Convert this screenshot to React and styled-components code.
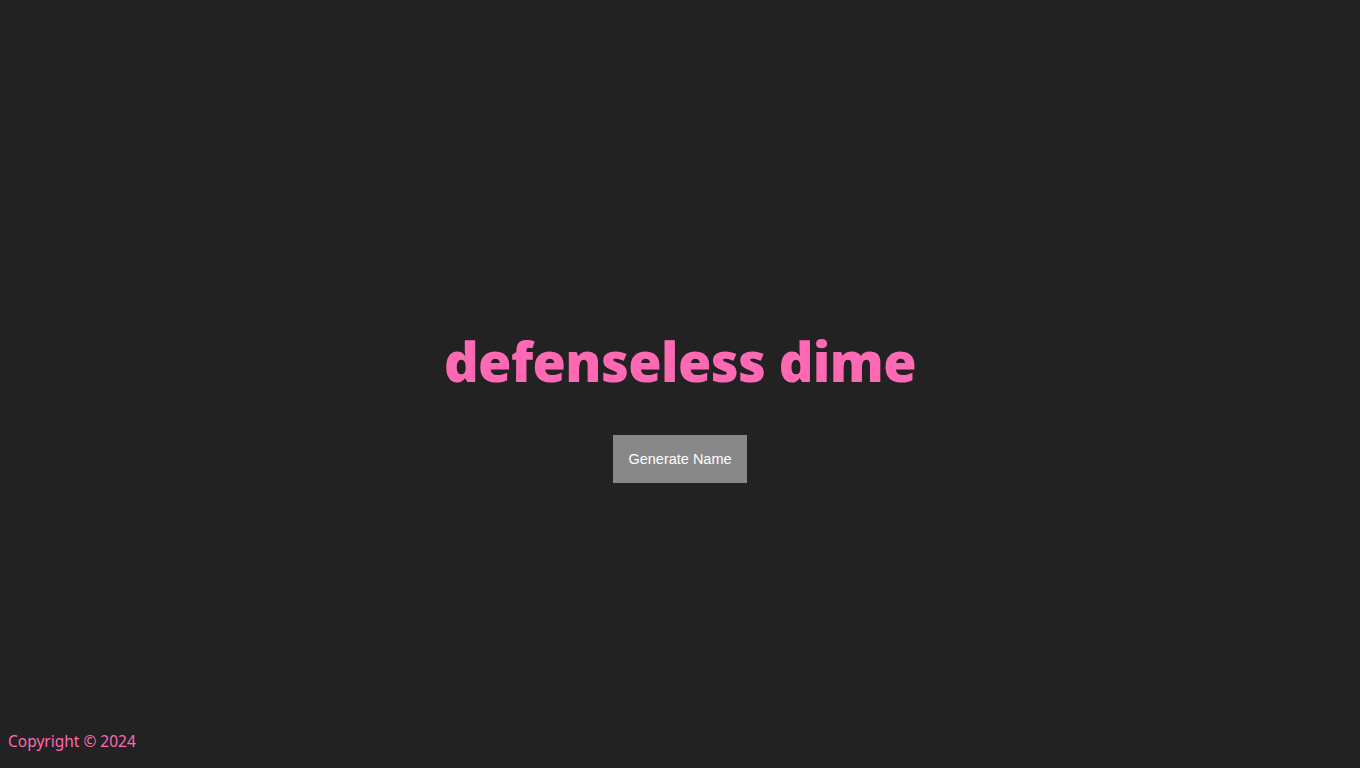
import React, { useState } from "react";
import styled, { createGlobalStyle } from "styled-components";

const adjectives = ["defenseless", "brave", "quiet", "shiny", "clumsy", "gentle"];
const nouns = ["dime", "otter", "lamp", "river", "pencil", "comet"];

const pick = (list) => list[Math.floor(Math.random() * list.length)];

const GlobalStyle = createGlobalStyle`
  html, body {
    margin: 0;
    padding: 0;
    background-color: #222222;
  }
`;

const App = () => {
  const [name, setName] = useState("defenseless dime");

  const handleGenerate = () => {
    setName(`${pick(adjectives)} ${pick(nouns)}`);
  };

  return (
    <>
      <GlobalStyle />
      <Page>
        <Main>
          <Title>{name}</Title>
          <GenerateButton onClick={handleGenerate}>Generate Name</GenerateButton>
        </Main>
        <Footer>Copyright © 2024</Footer>
      </Page>
    </>
  );
};

export default App;

const Page = styled.div`
  min-height: 100vh;
  display: flex;
  flex-direction: column;
  box-sizing: border-box;
  padding: 8px;
`;

const Main = styled.main`
  flex: 1;
  display: flex;
  flex-direction: column;
  align-items: center;
  justify-content: center;
  padding-top: 74px;
`;

const Title = styled.h1`
  margin: 0 0 41px;
  font-family: "Noto Sans", "Open Sans", sans-serif;
  font-weight: 900;
  font-size: 54px;
  line-height: 1.2;
  color: #ff69b4;
  letter-spacing: -0.6px;
`;

const GenerateButton = styled.button`
  width: 134px;
  height: 48px;
  border: none;
  background-color: #888888;
  color: #ffffff;
  font-family: "Liberation Sans", Arial, sans-serif;
  font-size: 14.5px;
  cursor: pointer;
`;

const Footer = styled.footer`
  font-family: "Noto Sans", "Open Sans", sans-serif;
  font-size: 15.5px;
  color: #ff69b4;
  padding-bottom: 8px;
`;
